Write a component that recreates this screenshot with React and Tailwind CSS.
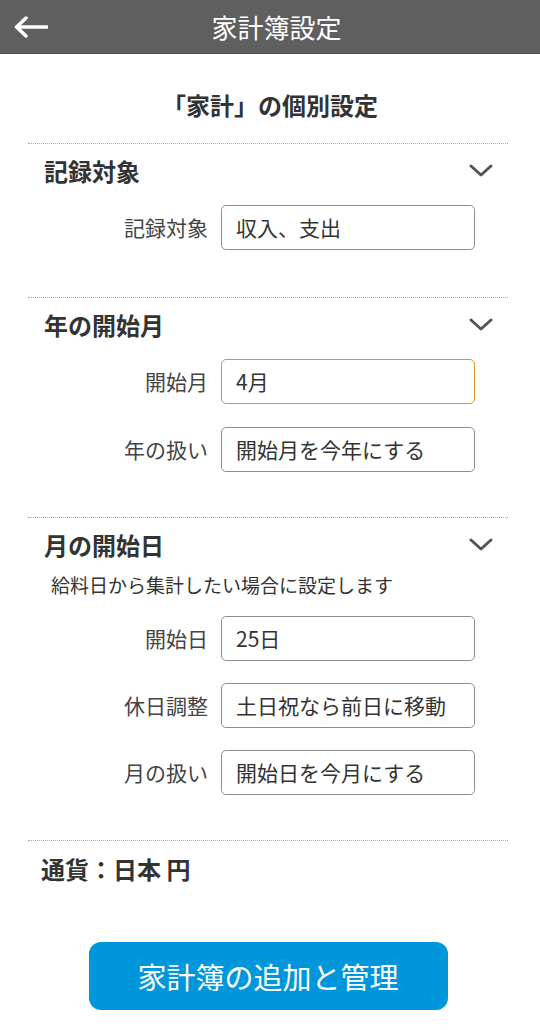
import React from "react";

const font = { fontFamily: '"Noto Sans CJK JP", "Noto Sans", sans-serif' };

function Chevron() {
  return (
    <svg width="24" height="14" viewBox="0 0 24 14" fill="none">
      <path d="M2 2 L12 11 L22 2" stroke="#555" strokeWidth="3" strokeLinecap="round" strokeLinejoin="round" />
    </svg>
  );
}

function Row({ label, value, focused }) {
  return (
    <div className="flex items-center">
      <div className="w-[180px] mr-[13px] text-right text-[21px] text-[#444] leading-none">{label}</div>
      <div
        className={
          focused
            ? "w-[254px] h-[45px] flex items-center pl-[14px] rounded-[5px] border border-[#d49a1c] text-[21px] text-[#333]"
            : "w-[254px] h-[45px] flex items-center pl-[14px] rounded-[5px] border border-[#8c8c8c] text-[21px] text-[#333]"
        }
      >
        {value}
      </div>
    </div>
  );
}

function SectionHeader({ title }) {
  return (
    <div className="h-[54px] flex items-center justify-between pl-[16px] pr-[15px]">
      <div className="text-[24px] font-bold text-[#333] leading-none">{title}</div>
      <Chevron />
    </div>
  );
}

export default function App() {
  return (
    <div className="w-[540px] h-[1030px] bg-white overflow-hidden" style={font}>
      <div className="h-[54px] bg-[#5f5f5f] border-b border-[#4c4c4c] flex items-center">
        <div className="w-[60px] pl-[14px] flex items-center">
          <svg width="34" height="22" viewBox="0 0 34 22" fill="none">
            <path d="M33 11 H3 M12 2 L2.5 11 L12 20" stroke="#fff" strokeWidth="3.5" strokeLinecap="round" strokeLinejoin="round" />
          </svg>
        </div>
        <div className="flex-1 pr-[47px] text-center text-white text-[26px] leading-none">家計簿設定</div>
      </div>

      <div className="pt-[37px] pb-[24px] text-center text-[24px] font-bold text-[#333] leading-[28px]">「家計」の個別設定</div>

      <div className="ml-[28px] w-[480px]">
        <div className="border-t border-dotted border-[#a8a8a8]">
          <SectionHeader title="記録対象" />
          <div className="mt-[7px] pb-[47px] flex flex-col gap-[23px]">
            <Row label="記録対象" value="収入、支出" />
          </div>
        </div>

        <div className="border-t border-dotted border-[#a8a8a8]">
          <SectionHeader title="年の開始月" />
          <div className="mt-[7px] pb-[45px] flex flex-col gap-[23px]">
            <Row label="開始月" value="4月" focused />
            <Row label="年の扱い" value="開始月を今年にする" />
          </div>
        </div>

        <div className="border-t border-dotted border-[#a8a8a8]">
          <SectionHeader title="月の開始日" />
          <div className="pl-[23px] h-[24px] flex items-center text-[19px] text-[#333] leading-none">給料日から集計したい場合に設定します</div>
          <div className="mt-[20px] pb-[45px] flex flex-col gap-[22px]">
            <Row label="開始日" value="25日" />
            <Row label="休日調整" value="土日祝なら前日に移動" />
            <Row label="月の扱い" value="開始日を今月にする" />
          </div>
        </div>

        <div className="border-t border-dotted border-[#a8a8a8]">
          <div className="h-[56px] flex items-center pl-[13px] text-[24px] font-bold text-[#333] leading-none">通貨：日本 円</div>
          <div className="mt-[45px] mx-auto w-[359px] h-[68px] rounded-[12px] bg-[#0096dc] flex items-center justify-center text-white text-[29px] leading-none">
            家計簿の追加と管理
          </div>
        </div>
      </div>
    </div>
  );
}
